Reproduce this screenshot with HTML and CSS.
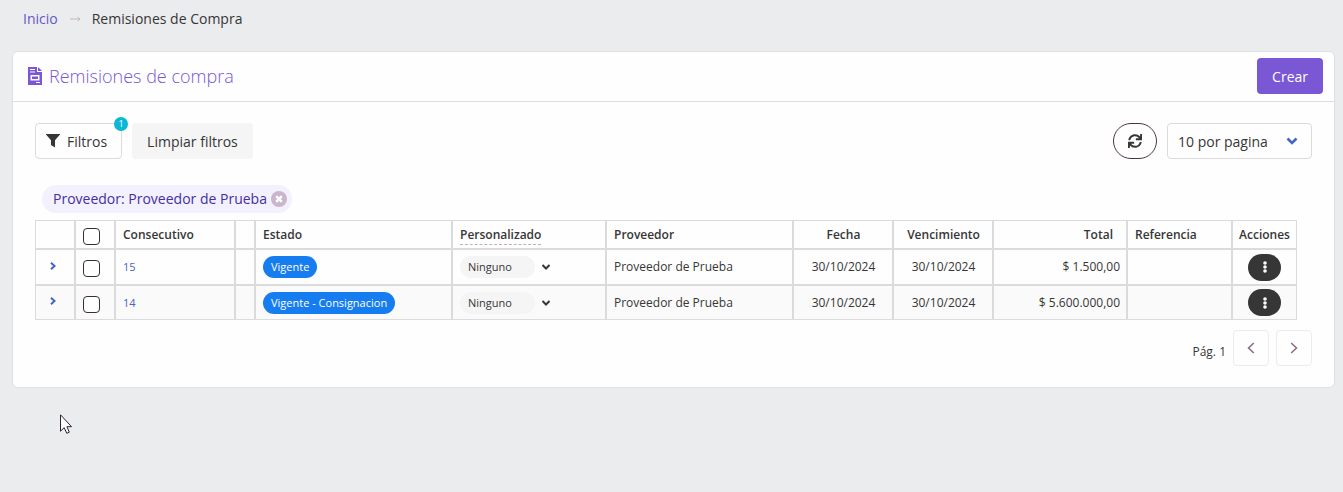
FILE: index.html
```html
<!DOCTYPE html>
<html lang="es">
<head>
    <meta charset="UTF-8">
    <meta name="viewport" content="width=device-width, initial-scale=1.0">
    <title>Remisiones de Compra</title>
    <link rel="stylesheet" href="styles.css">
</head>
<body>

<nav class="breadcrumb">
    <a href="#">Inicio</a>
    <svg class="arrow" viewBox="0 0 12 8"><path d="M1 4h10M8.500 2L11 4L8.500 6"/></svg>
    <span>Remisiones de Compra</span>
</nav>

<main class="card">
    <header class="card-header">
        <svg class="title-icon" viewBox="0 0 14 18">
            <path fill="#7957d5" fill-rule="evenodd" d="M0 0h9v5h5v13H0zM2 2v1h5V2zM2 4.500v1h5v-1zM2.500 8v5.500h9V8zM4 9.500h6v2.500H4zM8 15v1h4v-1z"/>
            <path fill="#7957d5" d="M10 0L14 4H10z"/>
        </svg>
        <h1>Remisiones de compra</h1>
        <button type="button" class="button primary">Crear</button>
    </header>

    <div class="card-content">
        <div class="toolbar">
            <button type="button" class="button filter-button">
                <svg class="filter-icon" viewBox="0 0 14 14"><path fill="#363636" d="M.3 0h13.400c.4 0 .4.500.1.800L9 6.300V13.500L5 11V6.300L.2.800C-.1.500-.1 0 .3 0z"/></svg>
                Filtros
                <span class="badge">1</span>
            </button>
            <button type="button" class="button clear-button">Limpiar filtros</button>
            <button type="button" class="refresh-button" aria-label="Actualizar">
                <svg viewBox="0 0 512 512"><path fill="#363636" d="M440.650 12.570l4 82.770A247.160 247.160 0 0 0 255.830 8C134.730 8 33.910 94.920 12.290 209.820A12 12 0 0 0 24.090 224h49.050a12 12 0 0 0 11.670-9.260 175.910 175.910 0 0 1 317-56.940l-101.460-4.860a12 12 0 0 0-12.570 12v47.410a12 12 0 0 0 12 12H500a12 12 0 0 0 12-12V12a12 12 0 0 0-12-12h-47.370a12 12 0 0 0-11.980 12.570zM255.830 432a175.610 175.610 0 0 1-146-77.800l101.800 4.870a12 12 0 0 0 12.570-12v-47.400a12 12 0 0 0-12-12H12a12 12 0 0 0-12 12V500a12 12 0 0 0 12 12h47.350a12 12 0 0 0 12-12.600l-4.150-82.570A247.170 247.170 0 0 0 255.830 504c121.110 0 221.930-86.920 243.550-201.820a12 12 0 0 0-11.800-14.180h-49.050a12 12 0 0 0-11.670 9.260A175.860 175.860 0 0 1 255.830 432z"/></svg>
            </button>
            <div class="select">
                <select aria-label="Registros por pagina">
                    <option>10 por pagina</option>
                    <option>20 por pagina</option>
                </select>
                <svg viewBox="0 0 12 8"><path d="M1.500 1.500L6 6L10.500 1.500"/></svg>
            </div>
        </div>

        <div class="tag">
            <span>Proveedor: Proveedor de Prueba</span>
            <button type="button" aria-label="Quitar filtro">
                <svg viewBox="0 0 16 16"><circle cx="8" cy="8" r="8" fill="#cbb5cd"/><path d="M5.200 5.200L10.800 10.800M10.800 5.200L5.200 10.800" stroke="#fff" stroke-width="2.600"/></svg>
            </button>
        </div>

        <div class="table-wrapper">
            <table>
                <colgroup>
                    <col class="col-icon">
                    <col class="col-icon">
                    <col class="col-number">
                    <col class="col-gap">
                    <col class="col-status">
                    <col class="col-custom">
                    <col class="col-provider">
                    <col class="col-date">
                    <col class="col-date">
                    <col class="col-total">
                    <col class="col-reference">
                    <col class="col-actions">
                </colgroup>
                <thead>
                    <tr>
                        <th></th>
                        <th><input type="checkbox" aria-label="Seleccionar todo"></th>
                        <th>Consecutivo</th>
                        <th></th>
                        <th>Estado</th>
                        <th><span class="hint">Personalizado</span></th>
                        <th>Proveedor</th>
                        <th class="centered">Fecha</th>
                        <th class="centered">Vencimiento</th>
                        <th class="right sortable">Total</th>
                        <th>Referencia</th>
                        <th class="centered actions">Acciones</th>
                    </tr>
                </thead>
                <tbody>
                    <tr>
                        <td><button type="button" class="expand" aria-label="Ver detalle"><svg viewBox="0 0 6 8"><path d="M1 .8L4.500 4L1 7.200"/></svg></button></td>
                        <td><input type="checkbox" aria-label="Seleccionar 15"></td>
                        <td><a href="#">15</a></td>
                        <td></td>
                        <td><span class="status">Vigente</span></td>
                        <td>
                            <button type="button" class="custom">
                                <span>Ninguno</span>
                                <svg viewBox="0 0 10 6"><path d="M1.500 1L5 4.500L8.500 1"/></svg>
                            </button>
                        </td>
                        <td>Proveedor de Prueba</td>
                        <td class="centered">30/10/2024</td>
                        <td class="centered">30/10/2024</td>
                        <td class="right">$ 1.500,00</td>
                        <td></td>
                        <td class="centered actions"><button type="button" class="menu" aria-label="Acciones"><svg viewBox="0 0 4 12"><circle cx="2" cy="2" r="1.800"/><circle cx="2" cy="6" r="1.800"/><circle cx="2" cy="10" r="1.800"/></svg></button></td>
                    </tr>
                    <tr>
                        <td><button type="button" class="expand" aria-label="Ver detalle"><svg viewBox="0 0 6 8"><path d="M1 .8L4.500 4L1 7.200"/></svg></button></td>
                        <td><input type="checkbox" aria-label="Seleccionar 14"></td>
                        <td><a href="#">14</a></td>
                        <td></td>
                        <td><span class="status">Vigente - Consignacion</span></td>
                        <td>
                            <button type="button" class="custom">
                                <span>Ninguno</span>
                                <svg viewBox="0 0 10 6"><path d="M1.500 1L5 4.500L8.500 1"/></svg>
                            </button>
                        </td>
                        <td>Proveedor de Prueba</td>
                        <td class="centered">30/10/2024</td>
                        <td class="centered">30/10/2024</td>
                        <td class="right">$ 5.600.000,00</td>
                        <td></td>
                        <td class="centered actions"><button type="button" class="menu" aria-label="Acciones"><svg viewBox="0 0 4 12"><circle cx="2" cy="2" r="1.800"/><circle cx="2" cy="6" r="1.800"/><circle cx="2" cy="10" r="1.800"/></svg></button></td>
                    </tr>
                </tbody>
            </table>
        </div>

        <div class="pagination">
            <span>Pág. 1</span>
            <button type="button" aria-label="Anterior"><svg viewBox="0 0 8 12"><path d="M6.800 1L1.500 6L6.800 11"/></svg></button>
            <button type="button" aria-label="Siguiente"><svg viewBox="0 0 8 12"><path d="M1.200 1L6.500 6L1.200 11"/></svg></button>
        </div>
    </div>
</main>

<svg class="cursor" viewBox="0 0 12 20"><path fill="#fff" stroke="#2b2433" d="M.5.800V17.200L4.200 13.700L6.800 19.300L9.300 18.200L6.900 12.700H11.500z"/></svg>

</body>
</html>
```
FILE: styles.css
```css
* {
    box-sizing: border-box;
}

body {
    margin: 0;
    min-height: 100vh;
    background: #ebecee;
    color: #363636;
    font-family: "Open Sans", "Noto Sans", sans-serif;
    font-size: 14px;
    line-height: 20px;
}

button, select, input {
    margin: 0;
    font-family: inherit;
    color: inherit;
}

button {
    padding: 0;
    border: none;
    background: none;
    cursor: pointer;
}

svg {
    display: block;
    fill: none;
    flex-shrink: 0;
}

a {
    color: #4a62c4;
    text-decoration: none;
}

.breadcrumb {
    display: flex;
    align-items: center;
    gap: 11px;
    padding: 9px 23px 22px;
}

.breadcrumb a {
    color: #6558c8;
}

.arrow {
    width: 12px;
    height: 8px;
    stroke: #c5b5b8;
}

.card {
    margin: 0 8px 0 12px;
    background: #fefefe;
    border: 1px solid #e0e0e2;
    border-radius: 6px;
}

.card-header {
    display: flex;
    align-items: center;
    gap: 7px;
    padding: 6px 11px 7px 15px;
    border-bottom: 1px solid #dedee0;
}

.title-icon {
    width: 14px;
    height: 18px;
}

h1 {
    margin: 0;
    flex: 1;
    font-size: 18px;
    line-height: 24px;
    font-weight: 300;
    color: #7957d5;
}

.button {
    height: 36px;
    padding: 0 15px;
    border-radius: 4px;
    font-size: 14px;
}

.primary {
    background: #7957d5;
    color: #fff;
}

.card-content {
    padding: 21px 22px;
}

.toolbar {
    display: flex;
    align-items: center;
    gap: 10px;
}

.filter-button {
    position: relative;
    display: flex;
    align-items: center;
    gap: 7px;
    padding: 0 14px 0 10px;
    border: 1px solid #dbdbdb;
}

.filter-icon {
    width: 14px;
    height: 14px;
}

.badge {
    position: absolute;
    top: -7px;
    right: -7px;
    width: 14px;
    height: 14px;
    border-radius: 50%;
    background: #09b8d2;
    color: #fff;
    font-size: 9px;
    line-height: 14px;
}

.clear-button {
    background: #f5f5f5;
}

.refresh-button {
    display: flex;
    align-items: center;
    justify-content: center;
    width: 44px;
    height: 36px;
    margin-left: auto;
    border: 1px solid #4a3548;
    border-radius: 18px;
}

.refresh-button svg {
    width: 14px;
    height: 14px;
}

.select {
    position: relative;
}

.select select {
    appearance: none;
    width: 145px;
    height: 36px;
    padding: 0 34px 0 10px;
    border: 1px solid #dbdbdb;
    border-radius: 4px;
    background: #fefefe;
    font-size: 14px;
}

.select svg {
    position: absolute;
    top: 14px;
    right: 14px;
    width: 12px;
    height: 8px;
    stroke: #4464c4;
    stroke-width: 2.500;
    pointer-events: none;
}

.tag {
    display: flex;
    align-items: center;
    gap: 4px;
    width: fit-content;
    height: 28px;
    margin: 26px 0 7px 7px;
    padding: 0 5px 0 11px;
    border-radius: 14px;
    background: #f4f1fe;
    color: #43309e;
}

.tag svg {
    width: 16px;
    height: 16px;
}

.table-wrapper {
    padding-right: 15px;
}

table {
    width: 100%;
    table-layout: fixed;
    border-spacing: 0;
    border-collapse: separate;
    font-size: 12px;
    line-height: 20px;
}

.col-icon {
    width: 40px;
}

.col-number {
    width: 120px;
}

.col-gap {
    width: 20px;
}

.col-custom {
    width: 154px;
}

.col-provider {
    width: 187px;
}

.col-date {
    width: 100px;
}

.col-total {
    width: 134px;
}

.col-reference {
    width: 105px;
}

.col-actions {
    width: 65px;
}

th, td {
    height: 36px;
    padding: 0 6px 0 7px;
    border: 1px solid #dbdbdb;
    text-align: left;
    vertical-align: middle;
    white-space: nowrap;
}

th {
    height: 29px;
    font-weight: 600;
}

tr:nth-child(even) td {
    height: 35px;
    background: #fafafa;
}

.centered {
    text-align: center;
}

.right {
    text-align: right;
}

.sortable {
    padding-right: 13px;
}

.actions {
    padding: 0;
}

td a {
    font-size: 11px;
}

.hint {
    display: inline-block;
    line-height: 18px;
    border-bottom: 1px dashed #c5b0b0;
}

input[type="checkbox"] {
    appearance: none;
    display: block;
    width: 17px;
    height: 17px;
    margin-top: 3px;
    border: 1px solid #3a2d3a;
    border-radius: 4px;
    background: #fff;
}

.expand {
    display: block;
    padding: 0 7px 3px;
}

.expand svg {
    width: 6px;
    height: 8px;
    stroke: #4464c4;
    stroke-width: 2;
}

.status {
    display: inline-block;
    height: 22px;
    padding: 0 8px;
    border-radius: 11px;
    background: #167df0;
    color: #fff;
    font-size: 11px;
    line-height: 22px;
    vertical-align: middle;
}

.custom {
    display: flex;
    align-items: center;
    gap: 6px;
    font-size: 11px;
}

.custom span {
    width: 75px;
    height: 22px;
    padding-left: 8px;
    border-radius: 11px;
    background: #f5f5f5;
    line-height: 22px;
    text-align: left;
}

.custom svg {
    width: 10px;
    height: 6px;
    stroke: #363636;
    stroke-width: 2;
}

.menu {
    display: inline-flex;
    align-items: center;
    justify-content: center;
    width: 33px;
    height: 27px;
    border-radius: 14px;
    background: #363636;
    vertical-align: middle;
}

.menu svg {
    width: 4px;
    height: 12px;
    fill: #fff;
}

.pagination {
    display: flex;
    align-items: center;
    justify-content: flex-end;
    gap: 7px;
    margin-top: 10px;
    font-size: 12px;
}

.pagination span {
    padding-top: 8px;
}

.pagination button {
    display: flex;
    align-items: center;
    justify-content: center;
    width: 36px;
    height: 36px;
    border: 1px solid #ececec;
    border-radius: 4px;
}

.pagination svg {
    width: 8px;
    height: 12px;
    stroke: #8a6a80;
    stroke-width: 1.500;
}

/* mouse pointer over the page */
.cursor {
    position: absolute;
    left: 60px;
    top: 414px;
    width: 12px;
    height: 20px;
}
```
